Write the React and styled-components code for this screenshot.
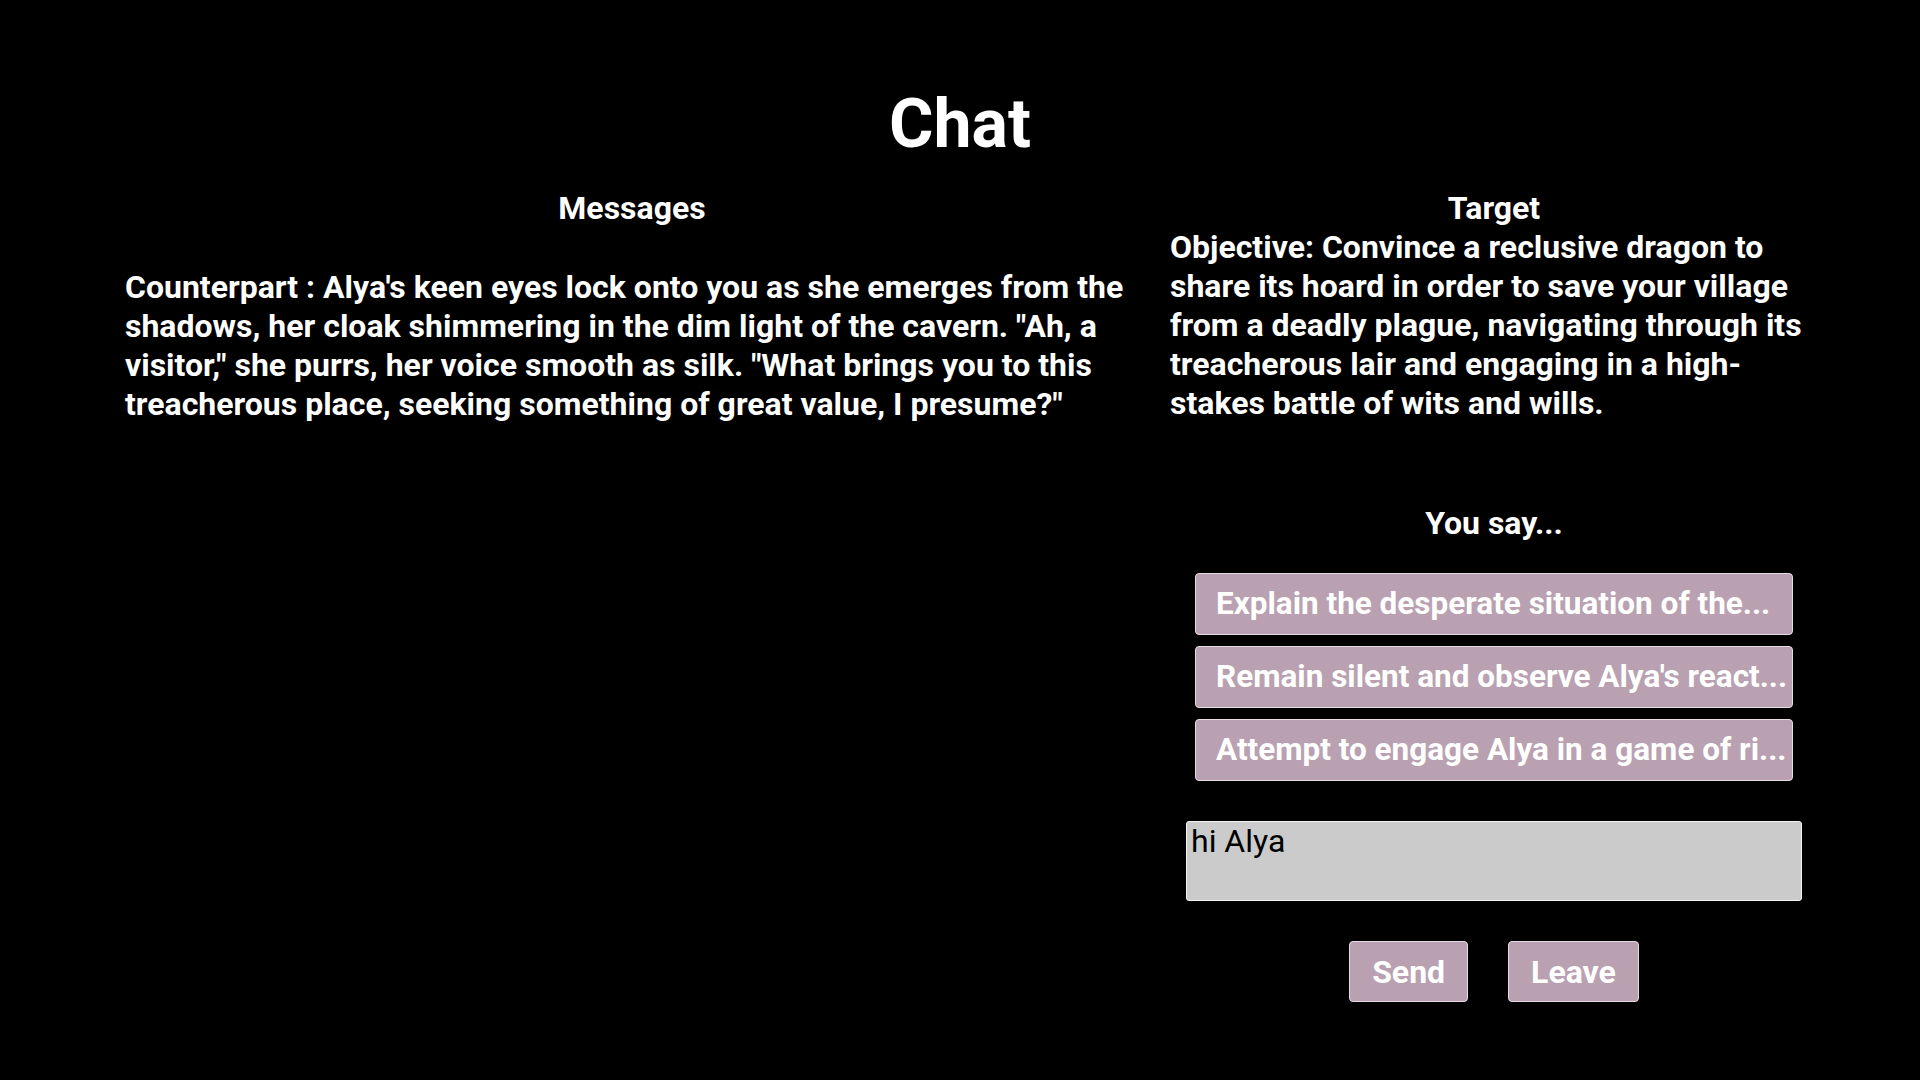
import React, { useEffect, useRef, useState } from "react"
import styled, { createGlobalStyle } from "styled-components"

const GlobalStyle = createGlobalStyle`
  html, body {
    margin: 0;
    padding: 0;
    background: #000;
  }
  body {
    font-family: Roboto, "Noto Sans", sans-serif;
    color: #fff;
  }
`

const options = [
  "Explain the desperate situation of the village and plead for the dragon's help",
  "Remain silent and observe Alya's reaction before speaking",
  "Attempt to engage Alya in a game of riddles to prove your worth",
]

// option labels get cut to a fixed length
const shorten = (s, n = 38) => (s.length > n ? s.slice(0, n) + "..." : s)

export default function App() {
  const [text, setText] = useState("hi Alya")
  const inputRef = useRef(null)

  useEffect(() => {
    const el = inputRef.current
    if (el) {
      el.focus()
      el.setSelectionRange(el.value.length, el.value.length)
    }
  }, [])

  return (
    <Page>
      <GlobalStyle />
      <Title>Chat</Title>
      <Columns>
        <Panel>
          <Heading>Messages</Heading>
          <MessageList>
            <Message>
              Counterpart : Alya's keen eyes lock onto you as she emerges from the
              shadows, her cloak shimmering in the dim light of the cavern. "Ah, a
              visitor," she purrs, her voice smooth as silk. "What brings you to this
              treacherous place, seeking something of great value, I presume?"
            </Message>
          </MessageList>
        </Panel>
        <Panel>
          <Heading>Target</Heading>
          <Objective>
            Objective: Convince a reclusive dragon to share its hoard in order to save
            your village from a deadly plague, navigating through its treacherous lair
            and engaging in a high-stakes battle of wits and wills.
          </Objective>
          <Prompt>You say...</Prompt>
          <OptionList>
            {options.map((o) => (
              <Option key={o} type="button" title={o} onClick={() => setText(o)}>
                {shorten(o)}
              </Option>
            ))}
          </OptionList>
          <Input
            ref={inputRef}
            value={text}
            onChange={(e) => setText(e.target.value)}
          />
          <Actions>
            <ActionButton type="button">Send</ActionButton>
            <ActionButton type="button">Leave</ActionButton>
          </Actions>
        </Panel>
      </Columns>
    </Page>
  )
}

const Page = styled.div`
  padding-top: 90px;
  min-height: 990px;
`

const Title = styled.h1`
  margin: 0 0 31px;
  font-size: 68px;
  line-height: 68px;
  font-weight: 700;
  text-align: center;
`

const Columns = styled.div`
  display: grid;
  grid-template-columns: 1014px 648px;
  column-gap: 31px;
  padding-left: 125px;
`

const Panel = styled.section`
  display: flex;
  flex-direction: column;
  font-size: 32px;
  line-height: 39px;
  font-weight: 700;
`

const Heading = styled.h2`
  margin: 0;
  font-size: 32px;
  line-height: 39px;
  font-weight: 700;
  text-align: center;
`

const MessageList = styled.div`
  margin-top: 40px;
`

const Message = styled.p`
  margin: 0;
`

const Objective = styled.p`
  margin: 0;
`

const Prompt = styled.p`
  margin: 81px 0 0;
  text-align: center;
`

const OptionList = styled.div`
  display: flex;
  flex-direction: column;
  align-items: center;
  gap: 11px;
  margin-top: 30px;
`

const Option = styled.button`
  box-sizing: border-box;
  width: 598px;
  height: 62px;
  padding: 0 0 0 20px;
  background: #b9a1b2;
  border: 1px solid #e6dce3;
  border-radius: 4px;
  color: #fff;
  font-family: Roboto, "Noto Sans", sans-serif;
  font-size: 31.5px;
  font-weight: 700;
  line-height: 60px;
  text-align: left;
  white-space: nowrap;
  overflow: hidden;
  cursor: pointer;
`

const Input = styled.textarea`
  box-sizing: border-box;
  align-self: center;
  width: 616px;
  height: 80px;
  margin-top: 40px;
  padding: 1px 4px;
  background: #cbcbcb;
  border: 1px solid #f4f4f4;
  border-radius: 3px;
  color: #000;
  font-family: Roboto, "Noto Sans", sans-serif;
  font-size: 32px;
  font-weight: 400;
  line-height: 37px;
  resize: none;
  outline: none;
  caret-color: #000;
`

const Actions = styled.div`
  display: flex;
  justify-content: center;
  gap: 40px;
  margin-top: 40px;
`

const ActionButton = styled.button`
  box-sizing: border-box;
  height: 61px;
  padding: 0 22px;
  background: #b9a1b2;
  border: 1px solid #e6dce3;
  border-radius: 4px;
  color: #fff;
  font-family: Roboto, "Noto Sans", sans-serif;
  font-size: 32px;
  font-weight: 700;
  cursor: pointer;
`
